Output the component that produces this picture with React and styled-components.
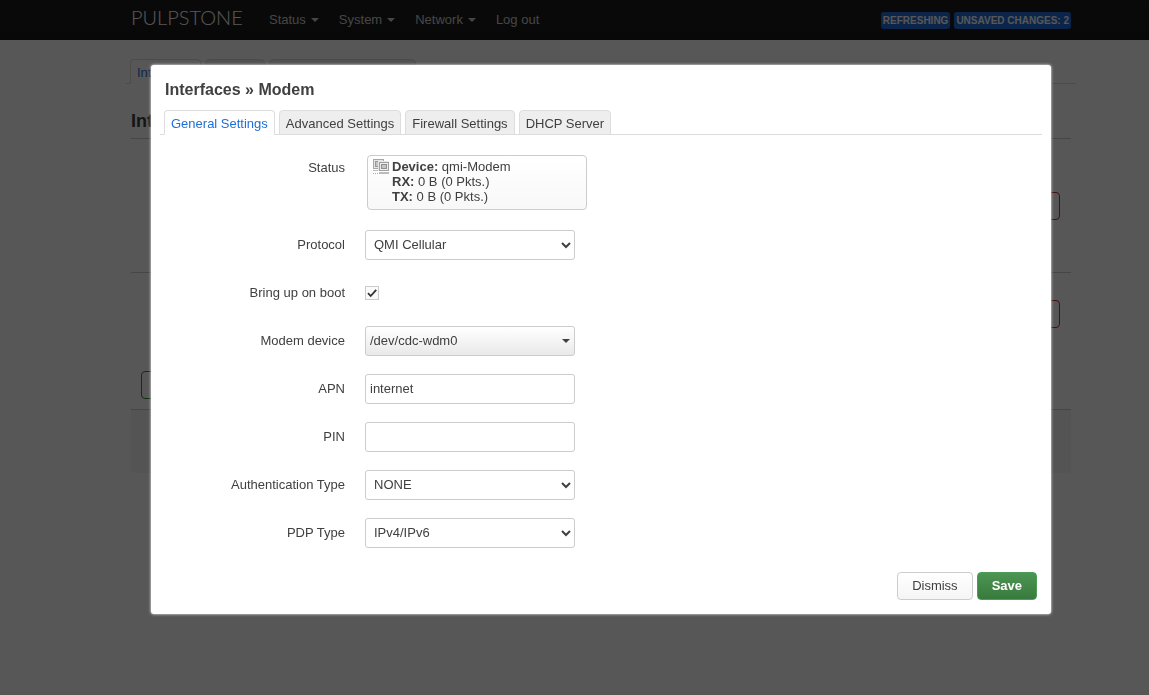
import { useState } from 'react';
import styled, { createGlobalStyle, css } from 'styled-components';

const GlobalStyle = createGlobalStyle`
  * {
    box-sizing: border-box;
  }
  body {
    margin: 0;
    background: #fff;
    color: #404040;
    font: 13px/18px 'Liberation Sans', Arial, sans-serif;
  }
  button, input, select {
    font: inherit;
    color: inherit;
    margin: 0;
  }
`;

const Page = styled.div`
  min-height: 100vh;
`;

const Container = styled.div`
  max-width: 940px;
  margin: 0 auto;
`;

const Header = styled.header`
  padding-left: 53px;
  background: linear-gradient(#1e1e1e, #191919);
  ${Container} {
    display: flex;
    align-items: center;
    height: 40px;
  }
`;

const Brand = styled.a`
  width: 129px;
  padding-bottom: 6px;
  color: #fff;
  font-family: Lato, sans-serif;
  font-size: 20px;
  font-weight: 300;
  line-height: 30px;
  text-decoration: none;
`;

const Menu = styled.nav`
  display: flex;
  flex: 1;
  gap: 20px;
  padding-left: 9px;
`;

const MenuLink = styled.a`
  display: flex;
  align-items: center;
  gap: 5px;
  color: #ccc;
  text-decoration: none;
`;

const Caret = styled.span`
  border: 4px solid transparent;
  border-top-color: currentColor;
  border-bottom: 0;
`;

const Indicators = styled.div`
  display: flex;
  gap: 4px;
`;

const Indicator = styled.button`
  height: 17px;
  padding: 0 2px;
  border: 0;
  border-radius: 3px;
  background: #206ed8;
  color: #fff;
  font-size: 10px;
  font-weight: bold;
  line-height: 17px;
  text-transform: uppercase;
`;

const Main = styled.main`
  padding: 19px 0 0 53px;
`;

const Tabs = styled.div`
  display: flex;
  gap: 4px;
  margin: 0 -4px;
  padding-left: 4px;
  border-bottom: 1px solid #ddd;
`;

const PageTabs = styled(Tabs)`
  margin: 0 -5px;
`;

const Tab = styled.button`
  height: 25px;
  margin-bottom: -1px;
  padding: 2px 6px 0;
  border: 1px solid #ddd;
  border-radius: 4px 4px 0 0;
  background: #eee;
  ${({ $active }) =>
    $active &&
    css`
      border-bottom-color: #fff;
      background: #fff;
      color: #1f6fd6;
    `}
`;

const PageTitle = styled.h2`
  margin: 24px 0 0;
  padding-bottom: 3px;
  border-bottom: 1px solid #ccc;
  font-size: 18px;
  line-height: 27px;
`;

const InterfaceRow = styled.div`
  display: flex;
  justify-content: flex-end;
  padding: ${({ $first }) => ($first ? '53px 11px 52px' : '27px 11px')};
  & + & {
    border-top: 1px solid #ccc;
  }
`;

const AddRow = styled.div`
  padding: 16px 10px 10px;
`;

const PageActions = styled.div`
  height: 64px;
  border-top: 1px solid #ccc;
  border-radius: 0 0 3px 3px;
  background: #f5f5f5;
`;

const buttonColors = {
  plain: css`
    border-color: #ccc;
    background: linear-gradient(#fff, #f5f5f5);
  `,
  danger: css`
    border-color: #c0302a;
    background: #fff;
  `,
  add: css`
    border-color: #2f8a3d;
    background: #fff;
  `,
  save: css`
    border-color: #4a9e58;
    background: linear-gradient(#4d9553, #377a3d);
    color: #fff;
    font-weight: bold;
  `,
};

const Button = styled.button`
  height: 28px;
  padding: 0 14px;
  border: 1px solid;
  border-radius: 4px;
  ${({ $kind = 'plain' }) => buttonColors[$kind]}
`;

const Overlay = styled.div`
  position: fixed;
  inset: 0;
  overflow: auto;
  padding: 65px 0 0 53px;
  background: rgba(0, 0, 0, 0.66);
`;

const Dialog = styled.section`
  max-width: 900px;
  margin: 0 auto;
  padding: 14px 13px;
  border-radius: 3px;
  background: #fff;
  box-shadow: 0 0 3px #fff;
`;

const DialogTitle = styled.h4`
  margin: 0 0 10px;
  padding-left: 1px;
  font-size: 16px;
  line-height: 21px;
`;

const Form = styled.form`
  padding-top: 18px;
`;

const Field = styled.div`
  display: flex;
  gap: 20px;
  padding-bottom: 18px;
`;

const labelStyle = css`
  width: 181px;
  padding-top: 6px;
  text-align: right;
`;

const Label = styled.label`
  ${labelStyle}
`;

const StatusLabel = styled.div`
  ${labelStyle}
`;

const Status = styled.div`
  display: flex;
  gap: 3px;
  width: 220px;
  height: 55px;
  margin: 2px;
  padding: 3px 5px;
  border: 1px solid #ccc;
  border-radius: 4px;
  background: linear-gradient(#fff, #f8f8f8);
  line-height: 15px;
`;

const controlStyle = css`
  width: 210px;
  height: 30px;
  padding: 3px 4px 5px;
  border: 1px solid #ccc;
  border-radius: 3px;
  background: #fff;
`;

const Input = styled.input`
  ${controlStyle}
`;

const Select = styled.select`
  ${controlStyle}
`;

const Dropdown = styled.button`
  ${controlStyle}
  display: flex;
  align-items: center;
  justify-content: space-between;
  padding: 4px;
  background: linear-gradient(#fff, #e9e9e9);
`;

const CheckCell = styled.div`
  display: flex;
  align-items: center;
  height: 30px;
`;

const Checkbox = styled.input`
  appearance: none;
  width: 14px;
  height: 14px;
  border: 1px solid #ccc;
  background: #fafafa;
  &:checked {
    background: #fafafa
      url("data:image/svg+xml,%3Csvg xmlns='http://www.w3.org/2000/svg' viewBox='0 0 12 12'%3E%3Cpath d='M2 6.2 4.7 9 10.2 2.8' fill='none' stroke='%23333' stroke-width='1.8'/%3E%3C/svg%3E")
      center / 12px no-repeat;
  }
`;

const Actions = styled.div`
  display: flex;
  justify-content: flex-end;
  gap: 4px;
  padding: 6px 1px 0 0;
`;

function NetworkIcon() {
  return (
    <svg width='16' height='16' viewBox='0 0 16 16' shapeRendering='crispEdges' aria-hidden='true'>
      <path d='M0 0h11v10H0z' fill='#a8a8a8' />
      <path d='M1 1h9v8H1z' fill='#e6e6e6' />
      <path d='M2 2h7v6H2z' fill='#999' />
      <path d='M3 3h5v4H3z' fill='#c4c4c4' />
      <path d='M5 2h11v10H5z' fill='#e6e6e6' />
      <path d='M6 3h10v9H6z' fill='#a0a0a0' />
      <path d='M7 4h8v7H7z' fill='#eee' />
      <path d='M8 5h6v5H8z' fill='#909090' />
      <path d='M9 6h4v3H9z' fill='#c4c4c4' />
      <path d='M0 11h5v1H0zM6 13h10v2H6z' fill='#bbb' />
      <path d='M0 14h1v1H0zM2 14h1v1H2zM4 14h1v1H4z' fill='#aaa' />
    </svg>
  );
}

const menu = [
  { title: 'Status', dropdown: true },
  { title: 'System', dropdown: true },
  { title: 'Network', dropdown: true },
  { title: 'Log out' },
];

const pageTabs = ['Interfaces', 'Devices', 'Global network options'];
const dialogTabs = ['General Settings', 'Advanced Settings', 'Firewall Settings', 'DHCP Server'];

function InterfacesPage() {
  return (
    <Page>
      <Header>
        <Container>
          <Brand href='#'>PULPSTONE</Brand>
          <Menu>
            {menu.map(({ title, dropdown }) => (
              <MenuLink key={title} href='#'>
                {title}
                {dropdown && <Caret />}
              </MenuLink>
            ))}
          </Menu>
          <Indicators>
            <Indicator>Refreshing</Indicator>
            <Indicator>Unsaved Changes: 2</Indicator>
          </Indicators>
        </Container>
      </Header>
      <Main>
        <Container>
          <PageTabs>
            {pageTabs.map((title, i) => (
              <Tab key={title} $active={i === 0}>
                {title}
              </Tab>
            ))}
          </PageTabs>
          <PageTitle>Interfaces</PageTitle>
          <InterfaceRow $first>
            <Button $kind='danger'>Delete</Button>
          </InterfaceRow>
          <InterfaceRow>
            <Button $kind='danger'>Delete</Button>
          </InterfaceRow>
          <AddRow>
            <Button $kind='add'>Add new interface...</Button>
          </AddRow>
          <PageActions />
        </Container>
      </Main>
    </Page>
  );
}

function ModemDialog() {
  const [tab, setTab] = useState(dialogTabs[0]);

  return (
    <Overlay>
      <Dialog role='dialog' aria-labelledby='dialog-title'>
        <DialogTitle id='dialog-title'>Interfaces » Modem</DialogTitle>
        <Tabs role='tablist'>
          {dialogTabs.map(title => (
            <Tab key={title} role='tab' aria-selected={title === tab} $active={title === tab} onClick={() => setTab(title)}>
              {title}
            </Tab>
          ))}
        </Tabs>
        <Form onSubmit={e => e.preventDefault()}>
          <Field>
            <StatusLabel>Status</StatusLabel>
            <Status>
              <NetworkIcon />
              <div>
                <b>Device:</b> qmi-Modem
                <br />
                <b>RX:</b> 0 B (0 Pkts.)
                <br />
                <b>TX:</b> 0 B (0 Pkts.)
              </div>
            </Status>
          </Field>
          <Field>
            <Label htmlFor='proto'>Protocol</Label>
            <Select id='proto'>
              <option>QMI Cellular</option>
            </Select>
          </Field>
          <Field>
            <Label htmlFor='auto'>Bring up on boot</Label>
            <CheckCell>
              <Checkbox id='auto' type='checkbox' defaultChecked />
            </CheckCell>
          </Field>
          <Field>
            <Label htmlFor='device'>Modem device</Label>
            <Dropdown id='device' type='button' aria-haspopup='listbox'>
              /dev/cdc-wdm0
              <Caret />
            </Dropdown>
          </Field>
          <Field>
            <Label htmlFor='apn'>APN</Label>
            <Input id='apn' defaultValue='internet' />
          </Field>
          <Field>
            <Label htmlFor='pin'>PIN</Label>
            <Input id='pin' />
          </Field>
          <Field>
            <Label htmlFor='auth'>Authentication Type</Label>
            <Select id='auth'>
              <option>NONE</option>
            </Select>
          </Field>
          <Field>
            <Label htmlFor='pdp'>PDP Type</Label>
            <Select id='pdp'>
              <option>IPv4/IPv6</option>
            </Select>
          </Field>
          <Actions>
            <Button type='button'>Dismiss</Button>
            <Button $kind='save'>Save</Button>
          </Actions>
        </Form>
      </Dialog>
    </Overlay>
  );
}

export default function App() {
  return (
    <>
      <GlobalStyle />
      <InterfacesPage />
      <ModemDialog />
    </>
  );
}
